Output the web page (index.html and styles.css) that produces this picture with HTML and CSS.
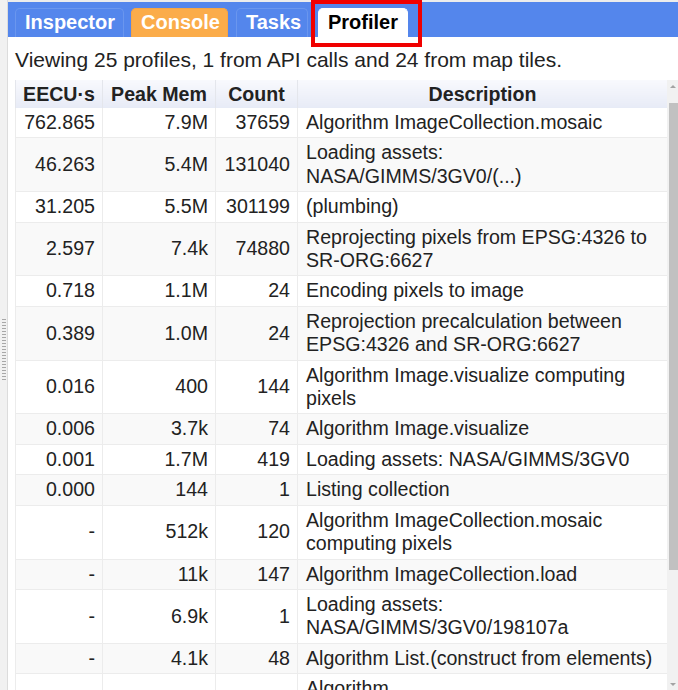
FILE: index.html
```html
<!DOCTYPE html>
<html>
<head>
<meta charset="utf-8">
<link rel="stylesheet" href="styles.css">
</head>
<body>
<div class="app">
  <div class="side"><div class="grip"></div></div>
  <div class="main">
    <div class="tabbar">
      <div class="tab tab-blue">Inspector</div>
      <div class="tab tab-orange">Console</div>
      <div class="tab tab-blue">Tasks</div>
      <div class="tab tab-white">Profiler<div class="highlight"></div></div>
    </div>
    <div class="summary">Viewing 25 profiles, 1 from API calls and 24 from map tiles.</div>
    <div class="tablewrap">
      <div class="tablebox">
        <table class="prof">
          <colgroup><col class="c1"><col class="c2"><col class="c3"><col class="c4"></colgroup>
          <thead>
            <tr><th>EECU·s</th><th>Peak Mem</th><th>Count</th><th>Description</th></tr>
          </thead>
          <tbody>
            <tr><td>762.865</td><td>7.9M</td><td>37659</td><td>Algorithm ImageCollection.mosaic</td></tr>
            <tr><td>46.263</td><td>5.4M</td><td>131040</td><td>Loading assets: <span class="nw">NASA/GIMMS/3GV0/(...)</span></td></tr>
            <tr><td>31.205</td><td>5.5M</td><td>301199</td><td>(plumbing)</td></tr>
            <tr><td>2.597</td><td>7.4k</td><td>74880</td><td>Reprojecting pixels from EPSG:4326 to <span class="nw">SR-ORG:6627</span></td></tr>
            <tr><td>0.718</td><td>1.1M</td><td>24</td><td>Encoding pixels to image</td></tr>
            <tr><td>0.389</td><td>1.0M</td><td>24</td><td>Reprojection precalculation between <span class="nw">EPSG:4326</span> and <span class="nw">SR-ORG:6627</span></td></tr>
            <tr><td>0.016</td><td>400</td><td>144</td><td>Algorithm Image.visualize computing pixels</td></tr>
            <tr><td>0.006</td><td>3.7k</td><td>74</td><td>Algorithm Image.visualize</td></tr>
            <tr><td>0.001</td><td>1.7M</td><td>419</td><td>Loading assets: NASA/GIMMS/3GV0</td></tr>
            <tr><td>0.000</td><td>144</td><td>1</td><td>Listing collection</td></tr>
            <tr><td>-</td><td>512k</td><td>120</td><td>Algorithm ImageCollection.mosaic computing pixels</td></tr>
            <tr><td>-</td><td>11k</td><td>147</td><td>Algorithm ImageCollection.load</td></tr>
            <tr><td>-</td><td>6.9k</td><td>1</td><td>Loading assets: <span class="nw">NASA/GIMMS/3GV0/198107a</span></td></tr>
            <tr><td>-</td><td>4.1k</td><td>48</td><td>Algorithm List.(construct from elements)</td></tr>
            <tr class="last"><td></td><td></td><td></td><td>Algorithm</td></tr>
          </tbody>
        </table>
      </div>
      <div class="scrollbar">
        <div class="arrow arrow-up"></div>
        <div class="track"><div class="thumb"></div></div>
        <div class="arrow arrow-down"></div>
      </div>
    </div>
  </div>
</div>
</body>
</html>
```
FILE: styles.css
```css
html, body {
  margin: 0;
  padding: 0;
  background: #fff;
}
body {
  font-family: "Liberation Sans", Arial, sans-serif;
  color: #222;
  width: 678px;
  height: 690px;
  overflow: hidden;
}
.app {
  display: flex;
  height: 690px;
}
.side {
  width: 7px;
  flex: none;
  background: #f1f1f1;
  border-right: 1px solid #dcdcdc;
  display: flex;
  align-items: flex-start;
}
.grip {
  margin-top: 318px;
  margin-left: 2px;
  width: 4px;
  height: 62px;
  background-image: radial-gradient(circle, #a8a8a8 0.8px, transparent 1px);
  background-size: 2px 3px;
}
.main {
  flex: 1;
  display: flex;
  flex-direction: column;
  min-width: 0;
  border-top: 2px solid #ececec;
}
.tabbar {
  height: 35px;
  background: #5486ec;
  display: flex;
  align-items: flex-end;
  padding-left: 7px;
  box-sizing: border-box;
}
.tab {
  position: relative;
  height: 29px;
  box-sizing: border-box;
  border-radius: 5px 5px 0 0;
  font-weight: bold;
  font-size: 20px;
  line-height: 27px;
  padding: 0 9px;
  border: 1px solid #4a7be0;
  border-bottom: none;
  text-align: center;
}
.tab-blue {
  color: #fff;
  background: #5486ec;
  border-color: #6a96ee;
}
.tab-orange {
  color: #fff;
  background: #fbac4a;
  border-color: #f6a544;
}
.tab-white {
  color: #000;
  background: #fff;
  border-color: #fff;
}
.tabbar .tab:nth-child(1) { width: 109px; }
.tabbar .tab:nth-child(2) { width: 97px; margin-left: 7px; }
.tabbar .tab:nth-child(3) { width: 72px; margin-left: 8px; }
.tabbar .tab:nth-child(4) { width: 90px; margin-left: 10px; }
.highlight {
  position: absolute;
  left: -8px;
  top: -9px;
  width: 111px;
  height: 47px;
  box-sizing: border-box;
  border: 4px solid #f00000;
}
.summary {
  font-size: 21px;
  line-height: 24px;
  padding: 11px 0 0 7px;
  height: 43px;
  box-sizing: border-box;
  color: #222;
  white-space: nowrap;
}
.tablewrap {
  flex: 1;
  display: flex;
  min-height: 0;
  padding-left: 7px;
}
.tablebox {
  width: 652px;
  overflow: hidden;
  flex: none;
}
.prof {
  border-collapse: collapse;
  width: 652px;
  table-layout: fixed;
  font-size: 19.6px;
}
.c1 { width: 87px; }
.c2 { width: 113px; }
.c3 { width: 82px; }
.c4 { width: 370px; }
.prof th {
  font-weight: bold;
  text-align: center;
  background: linear-gradient(#f8f9fd, #e7ebf6);
  border-left: 1px solid #e4e6ec;
  border-right: 1px solid #e4e6ec;
  line-height: 22px;
  padding: 3px 2px 3px;
  height: 28px;
  box-sizing: border-box;
  color: #222;
  white-space: nowrap;
}
.prof td {
  line-height: 23.4px;
  padding: 3px 7px 3px 7px;
  border: 1px solid #ececec;
  border-top: none;
  vertical-align: middle;
  text-align: right;
  color: #222;
}
.prof td:nth-child(4) {
  text-align: left;
  padding-left: 8px;
  padding-right: 4px;
}
.prof tr.last td {
  vertical-align: top;
}
.nw {
  white-space: nowrap;
}
.prof tbody tr:nth-child(even) td {
  background: #f9f9f9;
}
.scrollbar {
  width: 11px;
  flex: none;
  background: #f1f1f1;
  display: flex;
  flex-direction: column;
}
.arrow {
  height: 13px;
  flex: none;
  position: relative;
}
.arrow-up::after, .arrow-down::after {
  content: "";
  position: absolute;
  left: 3px;
  width: 0;
  height: 0;
  border-left: 3px solid transparent;
  border-right: 3px solid transparent;
}
.arrow-up::after {
  top: 5px;
  border-bottom: 3px solid #a3a3a3;
}
.arrow-down::after {
  top: 6px;
  border-top: 3px solid #a3a3a3;
}
.track {
  flex: 1;
  padding: 10px 0 0 2px;
}
.thumb {
  height: 467px;
  background: #c1c1c1;
}
```
